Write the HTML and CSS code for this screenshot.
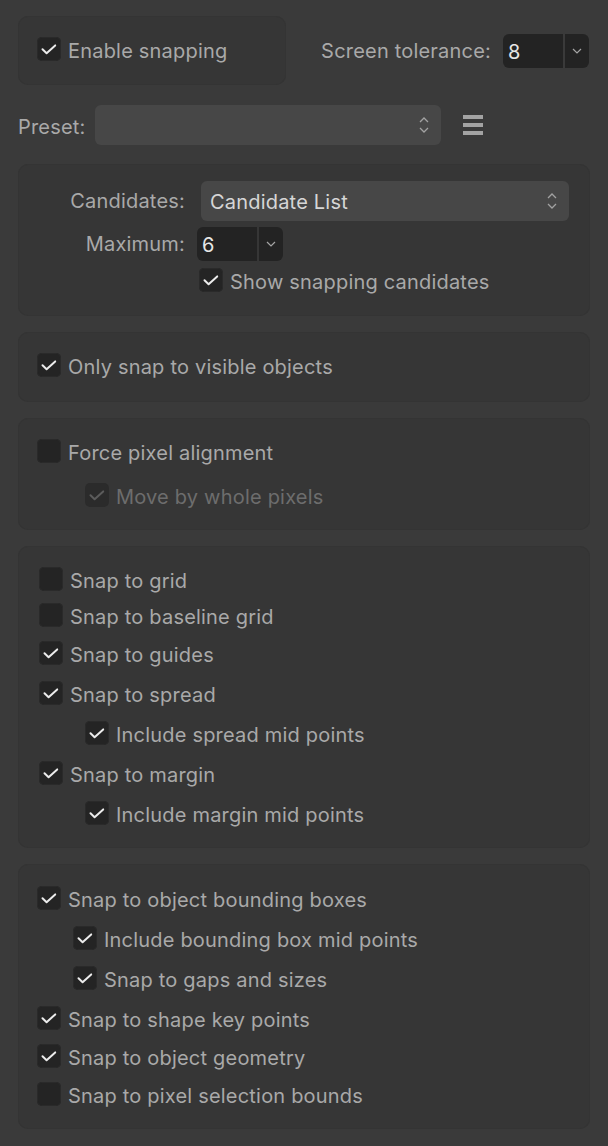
FILE: index.html
```html
<!DOCTYPE html>
<html>
<head>
<meta charset="utf-8">
<link rel="stylesheet" href="styles.css">
</head>
<body>
<div class="panel">
  <div class="top-row">
    <div class="box box-enable">
      <label class="cb-row">
        <span class="cb on"><svg viewBox="0 0 24 24"><path d="M5.5 12.3 L9.6 16.2 L18.2 8.4"/></svg></span>
        <span class="lbl">Enable snapping</span>
      </label>
    </div>
    <div class="tol">
      <span class="lbl">Screen tolerance:</span>
      <div class="numfield">
        <span class="num">8</span>
        <span class="arrow"><svg viewBox="0 0 10 6"><path d="M1 1 L5 5 L9 1"/></svg></span>
      </div>
    </div>
  </div>

  <div class="preset-row">
    <span class="lbl preset-lbl">Preset:</span>
    <div class="select preset-select">
      <span class="sel-text"></span>
      <svg class="updown" viewBox="0 0 10 16"><path d="M1 5 L5 1 L9 5"/><path d="M1 11 L5 15 L9 11"/></svg>
    </div>
    <div class="menu-icon"><span></span><span></span><span></span></div>
  </div>

  <div class="box box-cand">
    <span class="lbl right">Candidates:</span>
    <div class="select cand-select">
      <span class="sel-text">Candidate List</span>
      <svg class="updown" viewBox="0 0 10 16"><path d="M1 5 L5 1 L9 5"/><path d="M1 11 L5 15 L9 11"/></svg>
    </div>
    <span class="lbl right">Maximum:</span>
    <div class="numfield max-field">
      <span class="num">6</span>
      <span class="arrow"><svg viewBox="0 0 10 6"><path d="M1 1 L5 5 L9 1"/></svg></span>
    </div>
    <span></span>
    <label class="cb-row show-cb">
      <span class="cb on"><svg viewBox="0 0 24 24"><path d="M5.5 12.3 L9.6 16.2 L18.2 8.4"/></svg></span>
      <span class="lbl">Show snapping candidates</span>
    </label>
  </div>

  <div class="box box-visible">
    <label class="cb-row">
      <span class="cb on"><svg viewBox="0 0 24 24"><path d="M5.5 12.3 L9.6 16.2 L18.2 8.4"/></svg></span>
      <span class="lbl">Only snap to visible objects</span>
    </label>
  </div>

  <div class="box box-pixel">
    <label class="cb-row">
      <span class="cb"></span>
      <span class="lbl">Force pixel alignment</span>
    </label>
    <label class="cb-row disabled sub48 mt20">
      <span class="cb on"><svg viewBox="0 0 24 24"><path d="M5.5 12.3 L9.6 16.2 L18.2 8.4"/></svg></span>
      <span class="lbl">Move by whole pixels</span>
    </label>
  </div>

  <div class="box box-grid">
    <label class="cb-row">
      <span class="cb"></span>
      <span class="lbl">Snap to grid</span>
    </label>
    <label class="cb-row mt12">
      <span class="cb"></span>
      <span class="lbl">Snap to baseline grid</span>
    </label>
    <label class="cb-row mt14">
      <span class="cb on"><svg viewBox="0 0 24 24"><path d="M5.5 12.3 L9.6 16.2 L18.2 8.4"/></svg></span>
      <span class="lbl">Snap to guides</span>
    </label>
    <label class="cb-row mt16">
      <span class="cb on"><svg viewBox="0 0 24 24"><path d="M5.5 12.3 L9.6 16.2 L18.2 8.4"/></svg></span>
      <span class="lbl">Snap to spread</span>
    </label>
    <label class="cb-row mt16 sub46">
      <span class="cb on"><svg viewBox="0 0 24 24"><path d="M5.5 12.3 L9.6 16.2 L18.2 8.4"/></svg></span>
      <span class="lbl">Include spread mid points</span>
    </label>
    <label class="cb-row mt16">
      <span class="cb on"><svg viewBox="0 0 24 24"><path d="M5.5 12.3 L9.6 16.2 L18.2 8.4"/></svg></span>
      <span class="lbl">Snap to margin</span>
    </label>
    <label class="cb-row mt16 sub46">
      <span class="cb on"><svg viewBox="0 0 24 24"><path d="M5.5 12.3 L9.6 16.2 L18.2 8.4"/></svg></span>
      <span class="lbl">Include margin mid points</span>
    </label>
  </div>

  <div class="box box-objects">
    <label class="cb-row">
      <span class="cb on"><svg viewBox="0 0 24 24"><path d="M5.5 12.3 L9.6 16.2 L18.2 8.4"/></svg></span>
      <span class="lbl">Snap to object bounding boxes</span>
    </label>
    <label class="cb-row mt16 sub36">
      <span class="cb on"><svg viewBox="0 0 24 24"><path d="M5.5 12.3 L9.6 16.2 L18.2 8.4"/></svg></span>
      <span class="lbl">Include bounding box mid points</span>
    </label>
    <label class="cb-row mt16 sub36">
      <span class="cb on"><svg viewBox="0 0 24 24"><path d="M5.5 12.3 L9.6 16.2 L18.2 8.4"/></svg></span>
      <span class="lbl">Snap to gaps and sizes</span>
    </label>
    <label class="cb-row mt16">
      <span class="cb on"><svg viewBox="0 0 24 24"><path d="M5.5 12.3 L9.6 16.2 L18.2 8.4"/></svg></span>
      <span class="lbl">Snap to shape key points</span>
    </label>
    <label class="cb-row mt14">
      <span class="cb on"><svg viewBox="0 0 24 24"><path d="M5.5 12.3 L9.6 16.2 L18.2 8.4"/></svg></span>
      <span class="lbl">Snap to object geometry</span>
    </label>
    <label class="cb-row mt14">
      <span class="cb"></span>
      <span class="lbl">Snap to pixel selection bounds</span>
    </label>
  </div>
</div>
</body>
</html>
```

FILE: styles.css
```css
* { box-sizing: border-box; }

html, body {
  margin: 0;
  padding: 0;
  background: #3a3a3a;
}

body {
  width: 608px;
  height: 1146px;
  overflow: hidden;
  font-family: Inter, "Noto Sans", "Liberation Sans", sans-serif;
  font-size: 20px;
  letter-spacing: 0.2px;
  color: #a9a9a9;
}

.panel {
  padding: 16px 18px 0 18px;
  width: 608px;
  display: flex;
  flex-direction: column;
}

.lbl {
  white-space: nowrap;
  line-height: 24px;
  padding-top: 3px;
  color: #a9a9a9;
}

.box {
  background: #363636;
  border-radius: 10px;
  box-shadow: inset 0 0 0 1px #343434;
}

/* top row */
.top-row {
  display: flex;
  align-items: center;
  justify-content: space-between;
}

.box-enable {
  width: 268px;
  height: 69px;
  padding: 21px 0 0 19px;
}

.tol {
  display: flex;
  align-items: center;
  gap: 12px;
  margin-right: 1px;
}

.tol .lbl {
  padding-top: 0;
}

.numfield {
  display: flex;
  height: 34px;
  width: 86px;
  gap: 2px;
}

.numfield .num {
  flex: 1;
  background: #232323;
  border-radius: 6px 0 0 6px;
  color: #e6e6e6;
  font-size: 20px;
  line-height: 34px;
  padding-top: 1px;
  padding-left: 5px;
}

.numfield .arrow {
  width: 24px;
  background: #232323;
  border-radius: 0 6px 6px 0;
  display: flex;
  align-items: center;
  justify-content: center;
}

.numfield .arrow svg {
  width: 10px;
  height: 6px;
  fill: none;
  stroke: #a5a5a5;
  stroke-width: 1.2;
}

/* preset */
.preset-row {
  display: flex;
  align-items: center;
  margin-top: 20px;
  height: 40px;
}

.preset-lbl {
  width: 77px;
}

.select {
  height: 40px;
  background: #474747;
  border-radius: 6px;
  display: flex;
  align-items: center;
  justify-content: space-between;
  padding: 0 12px 0 9px;
}

.select .sel-text {
  color: #d6d6d6;
  white-space: nowrap;
  padding-top: 1px;
}

.updown {
  width: 10px;
  height: 16px;
  fill: none;
  stroke: #a2a2a2;
  stroke-width: 1.3;
}

.preset-select {
  width: 346px;
}

.menu-icon {
  margin-left: 22px;
  width: 20px;
  display: flex;
  flex-direction: column;
  gap: 4px;
}

.menu-icon span {
  display: block;
  height: 4px;
  background: #a3a3a3;
}

/* candidates box */
.box-cand {
  margin-top: 19px;
  height: 152px;
  display: grid;
  grid-template-columns: 167px 1fr;
  column-gap: 12px;
  grid-template-rows: 40px 34px 24px;
  row-gap: 6px;
  padding: 17px 21px 0 0;
  align-items: center;
}

.lbl.right {
  text-align: right;
  padding-top: 0;
}

.cand-select {
  margin-left: 4px;
}

.max-field {
  width: 86px;
}

.show-cb {
  margin-left: 2px;
  margin-top: 2px;
}

/* checkbox rows */
.cb-row {
  display: flex;
  align-items: center;
  gap: 7px;
  height: 24px;
}

.cb {
  width: 24px;
  height: 24px;
  flex: none;
  border-radius: 5px;
  background: #242424;
  box-shadow: inset 0 0 0 1px #2a2a2a;
  display: flex;
  align-items: center;
  justify-content: center;
}

.cb svg {
  width: 24px;
  height: 24px;
  fill: none;
  stroke: #ececec;
  stroke-width: 2;
  stroke-linecap: round;
  stroke-linejoin: round;
}

.disabled .cb {
  background: #2b2b2b;
  box-shadow: none;
}

.disabled .cb svg {
  stroke: #5c5c5c;
}

.disabled .lbl {
  color: #6d6d6d;
}

.mt12 { margin-top: 12px; }
.mt14 { margin-top: 14px; }
.mt16 { margin-top: 16px; }
.mt20 { margin-top: 20px; }

.sub48 { margin-left: 48px; }
.sub46 { margin-left: 46px; }
.sub36 { margin-left: 36px; }

.box-visible {
  margin-top: 16px;
  height: 70px;
  padding: 21px 0 0 19px;
}

.box-pixel {
  margin-top: 16px;
  height: 112px;
  padding: 21px 0 0 19px;
  display: flex;
  flex-direction: column;
}

.box-grid {
  margin-top: 16px;
  height: 302px;
  padding: 21px 0 0 21px;
  display: flex;
  flex-direction: column;
}

.box-objects {
  margin-top: 16px;
  height: 265px;
  padding: 22px 0 0 19px;
  display: flex;
  flex-direction: column;
}
```
